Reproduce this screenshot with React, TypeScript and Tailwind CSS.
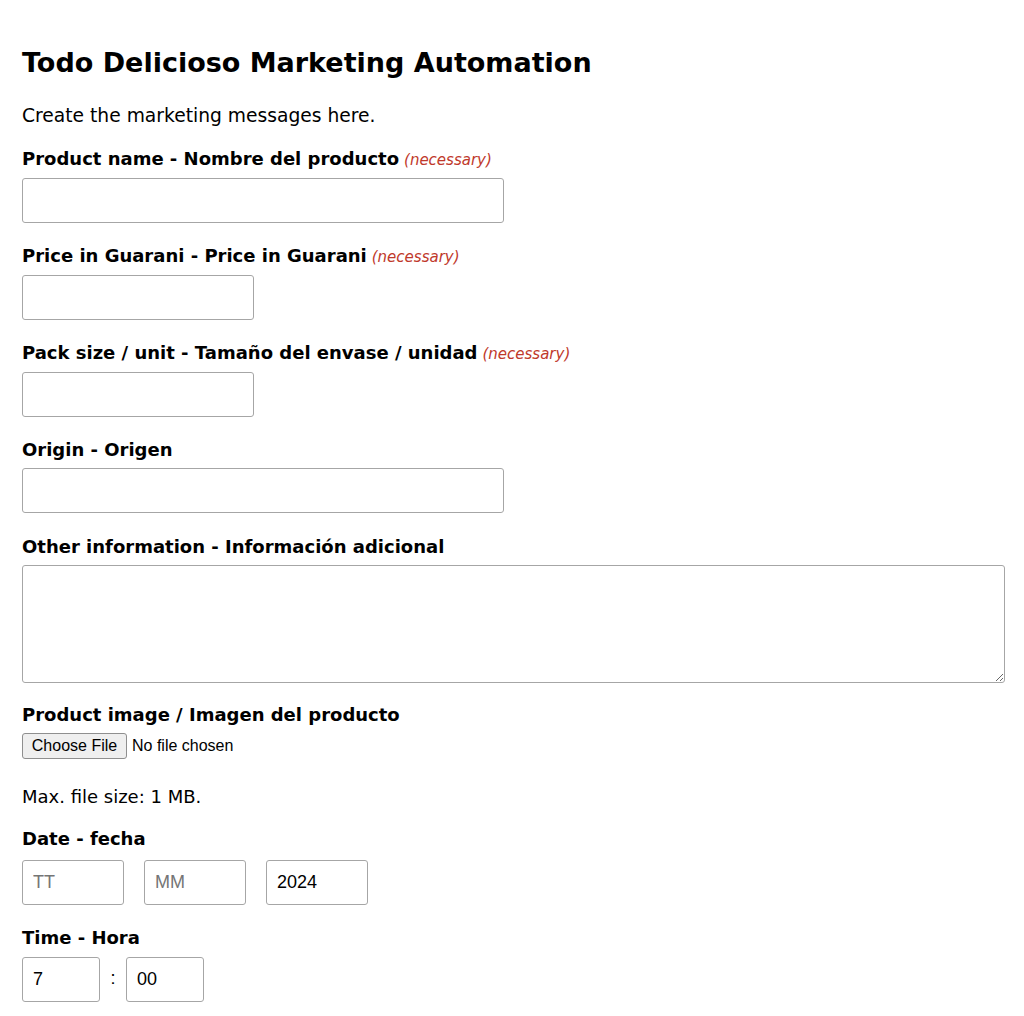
import React from 'react';

const font = { fontFamily: '"DejaVu Sans", Verdana, sans-serif' };

const Label = ({ text, required }: { text: string; required?: boolean }) => (
    <div className="text-[18px] leading-[22px] font-bold text-black mb-[7px]">
        {text}
        {required && <span className="ml-[5px] text-[15px] font-normal italic text-[#c0392b]">(necessary)</span>}
    </div>
);

const inputCls = "h-[45px] border border-[#a6a6a6] rounded-[3px] px-[10px] text-[18px] text-black placeholder:text-[#757575] outline-none bg-white";
const inputFont = { fontFamily: '"Liberation Sans", Arial, sans-serif' };

export default function App() {
    return (
        <div className="min-h-screen bg-white px-[22px] pt-[46px] pb-6 text-black" style={font}>
            <h1 className="text-[27px] leading-[34px] font-bold">Todo Delicioso Marketing Automation</h1>
            <p className="mt-[25px] text-[18.7px] leading-[22px]">Create the marketing messages here.</p>

            <div className="mt-[21px]">
                <Label text="Product name - Nombre del producto" required />
                <input className={`${inputCls} w-[482px] block`} style={inputFont} />
            </div>

            <div className="mt-[22px]">
                <Label text="Price in Guarani - Price in Guarani" required />
                <input className={`${inputCls} w-[232px] block`} style={inputFont} />
            </div>

            <div className="mt-[22px]">
                <Label text="Pack size / unit - Tamaño del envase / unidad" required />
                <input className={`${inputCls} w-[232px] block`} style={inputFont} />
            </div>

            <div className="mt-[22px]">
                <Label text="Origin - Origen" />
                <input className={`${inputCls} w-[482px] block`} style={inputFont} />
            </div>

            <div className="mt-[23px]">
                <Label text="Other information - Información adicional" />
                <textarea className="block w-[983px] h-[118px] border border-[#a6a6a6] rounded-[3px] px-[10px] py-2 text-[16px] outline-none" style={inputFont} />
            </div>

            <div className="mt-[21px]">
                <Label text="Product image / Imagen del producto" />
                <div className="flex items-center gap-[5px] mt-[3px]" style={inputFont}>
                    <button className="h-[26px] w-[105px] bg-[#efefef] border border-[#8f8f8f] rounded-[3px] text-[16px] text-black">Choose File</button>
                    <span className="text-[16px]">No file chosen</span>
                </div>
            </div>

            <p className="mt-[28px] text-[18px] leading-[20px]">Max. file size: 1 MB.</p>

            <div className="mt-[21px]">
                <Label text="Date - fecha" />
                <div className="flex gap-[20px] mt-[10px]">
                    <input placeholder="TT" className={`${inputCls} w-[102px]`} style={inputFont} />
                    <input placeholder="MM" className={`${inputCls} w-[102px]`} style={inputFont} />
                    <input defaultValue="2024" className={`${inputCls} w-[102px]`} style={inputFont} />
                </div>
            </div>

            <div className="mt-[22px]">
                <Label text="Time - Hora" />
                <div className="flex items-center mt-[8px]" style={inputFont}>
                    <input defaultValue="7" className={`${inputCls} w-[78px]`} style={inputFont} />
                    <span className="w-[26px] text-center text-[18px] -mt-[3px]">:</span>
                    <input defaultValue="00" className={`${inputCls} w-[78px]`} style={inputFont} />
                </div>
            </div>
        </div>
    );
}
